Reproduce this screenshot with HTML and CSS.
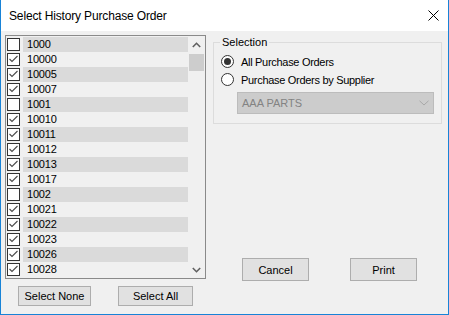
FILE: index.html
```html
<!DOCTYPE html>
<html>
<head>
<meta charset="utf-8">
<link rel="stylesheet" href="styles.css">
</head>
<body>
<div class="window">
  <div class="titlebar">
    <span class="title">Select History Purchase Order</span>
    <svg class="close" width="11" height="11" viewBox="0 0 11 11"><path d="M0.5 0.5 L10.5 10.5 M10.5 0.5 L0.5 10.5" stroke="#000" stroke-width="1" fill="none"/></svg>
  </div>
  <div class="client">
    <div class="left">
      <div class="listbox">
        <ul class="items">
          <li class="item band"><span class="cb"></span><span class="label">1000</span></li>
          <li class="item"><span class="cb checked"><svg viewBox="0 0 11 11"><polyline points="1.5,5 4,7.5 9.5,2"/></svg></span><span class="label">10000</span></li>
          <li class="item band"><span class="cb checked"><svg viewBox="0 0 11 11"><polyline points="1.5,5 4,7.5 9.5,2"/></svg></span><span class="label">10005</span></li>
          <li class="item"><span class="cb checked"><svg viewBox="0 0 11 11"><polyline points="1.5,5 4,7.5 9.5,2"/></svg></span><span class="label">10007</span></li>
          <li class="item band"><span class="cb"></span><span class="label">1001</span></li>
          <li class="item"><span class="cb checked"><svg viewBox="0 0 11 11"><polyline points="1.5,5 4,7.5 9.5,2"/></svg></span><span class="label">10010</span></li>
          <li class="item band"><span class="cb checked"><svg viewBox="0 0 11 11"><polyline points="1.5,5 4,7.5 9.5,2"/></svg></span><span class="label">10011</span></li>
          <li class="item"><span class="cb checked"><svg viewBox="0 0 11 11"><polyline points="1.5,5 4,7.5 9.5,2"/></svg></span><span class="label">10012</span></li>
          <li class="item band"><span class="cb checked"><svg viewBox="0 0 11 11"><polyline points="1.5,5 4,7.5 9.5,2"/></svg></span><span class="label">10013</span></li>
          <li class="item"><span class="cb checked"><svg viewBox="0 0 11 11"><polyline points="1.5,5 4,7.5 9.5,2"/></svg></span><span class="label">10017</span></li>
          <li class="item band"><span class="cb"></span><span class="label">1002</span></li>
          <li class="item"><span class="cb checked"><svg viewBox="0 0 11 11"><polyline points="1.5,5 4,7.5 9.5,2"/></svg></span><span class="label">10021</span></li>
          <li class="item band"><span class="cb checked"><svg viewBox="0 0 11 11"><polyline points="1.5,5 4,7.5 9.5,2"/></svg></span><span class="label">10022</span></li>
          <li class="item"><span class="cb checked"><svg viewBox="0 0 11 11"><polyline points="1.5,5 4,7.5 9.5,2"/></svg></span><span class="label">10023</span></li>
          <li class="item band"><span class="cb checked"><svg viewBox="0 0 11 11"><polyline points="1.5,5 4,7.5 9.5,2"/></svg></span><span class="label">10026</span></li>
          <li class="item"><span class="cb checked"><svg viewBox="0 0 11 11"><polyline points="1.5,5 4,7.5 9.5,2"/></svg></span><span class="label">10028</span></li>
        </ul>
        <div class="scrollbar">
          <div class="sb-btn"><svg width="9" height="6" viewBox="0 0 9 6"><polyline points="0.8,5 4.5,1.3 8.2,5" fill="none" stroke="#606060" stroke-width="1.6"/></svg></div>
          <div class="track"><div class="thumb"></div></div>
          <div class="sb-btn"><svg width="9" height="6" viewBox="0 0 9 6"><polyline points="0.8,1 4.5,4.7 8.2,1" fill="none" stroke="#606060" stroke-width="1.6"/></svg></div>
        </div>
      </div>
      <div class="left-buttons">
        <button class="btn btn-none">Select None</button>
        <button class="btn btn-all">Select All</button>
      </div>
    </div>
    <div class="right">
      <fieldset class="group">
        <legend>Selection</legend>
        <div class="group-body">
          <div class="radio"><span class="dot checked"></span><span>All Purchase Orders</span></div>
          <div class="radio"><span class="dot"></span><span>Purchase Orders by Supplier</span></div>
          <div class="combo"><span>AAA PARTS</span><svg width="10" height="6" viewBox="0 0 10 6"><polyline points="0.5,0.8 5,5 9.5,0.8" fill="none" stroke="#a8a8a8" stroke-width="1"/></svg></div>
        </div>
      </fieldset>
      <div class="right-buttons">
        <button class="btn btn-cancel">Cancel</button>
        <button class="btn btn-print">Print</button>
      </div>
    </div>
  </div>
</div>
</body>
</html>
```

FILE: styles.css
```css
html, body {
  margin: 0;
  padding: 0;
  background: #ffffff;
}

.window {
  width: 449px;
  height: 315px;
  box-sizing: border-box;
  border: 1px solid #1883d7;
  border-top: none;
  background: #f0f0f0;
  display: flex;
  flex-direction: column;
  font-family: "Liberation Sans", Arial, sans-serif;
  font-size: 11px;
  color: #000;
}

.titlebar {
  height: 31px;
  flex: none;
  background: #ffffff;
  display: flex;
  align-items: center;
  justify-content: space-between;
  padding: 0 9px 0 8px;
  font-size: 12px;
  letter-spacing: -0.15px;
}

.title {
  color: #000;
}

.close {
  display: block;
}

.client {
  display: flex;
  gap: 7px;
  padding: 4px 0 0 4px;
}

.left {
  width: 201px;
  flex: none;
}

.listbox {
  height: 244px;
  box-sizing: border-box;
  border: 1px solid #8a8a8a;
  background: #f0f0f0;
  display: flex;
}

.items {
  list-style: none;
  margin: 0;
  padding: 1px 0 0 0;
  width: 182px;
  flex: none;
  letter-spacing: -0.2px;
}

.item {
  height: 15px;
  display: flex;
  align-items: center;
}

.cb {
  width: 13px;
  height: 13px;
  box-sizing: border-box;
  border: 1px solid #333333;
  background: #ffffff;
  margin-left: 1px;
  flex: none;
}

.cb svg {
  display: block;
  width: 11px;
  height: 11px;
}

.cb polyline {
  fill: none;
  stroke: #4a4a4a;
  stroke-width: 1.1;
}

.label {
  flex: 1;
  height: 15px;
  line-height: 15px;
  margin-left: 3px;
  padding-left: 4px;
}

.band .label {
  background: #dadada;
}

.scrollbar {
  width: 17px;
  flex: none;
  display: flex;
  flex-direction: column;
  background: #f0f0f0;
}

.sb-btn {
  height: 17px;
  flex: none;
  display: flex;
  align-items: center;
  justify-content: center;
}

.track {
  flex: 1;
  padding-top: 1px;
}

.thumb {
  height: 17px;
  margin: 0 1px;
  background: #cdcdcd;
}

.left-buttons {
  display: flex;
  margin-top: 7px;
}

.btn {
  font-family: "Liberation Sans", Arial, sans-serif;
  font-size: 11px;
  color: #000;
  background: #e1e1e1;
  border: 1px solid #adadad;
  padding: 0;
  margin: 0;
  box-sizing: border-box;
}

.btn-none {
  width: 73px;
  height: 20px;
  margin-left: 13px;
}

.btn-all {
  width: 75px;
  height: 20px;
  margin-left: 27px;
}

.right {
  width: 229px;
  flex: none;
}

.group {
  margin: 1px 0 0 0;
  padding: 0;
  border: 1px solid #dcdcdc;
  height: 88px;
  box-sizing: border-box;
  min-width: 0;
}

.group legend {
  margin-left: 6px;
  padding: 0 2px;
  line-height: 13px;
  font-size: 11px;
}

.group-body {
  padding: 6px 0 0 7px;
  display: flex;
  flex-direction: column;
}

.radio {
  display: flex;
  align-items: center;
  height: 13px;
  gap: 7px;
  margin-bottom: 5px;
  letter-spacing: -0.3px;
}

.dot {
  width: 13px;
  height: 13px;
  box-sizing: border-box;
  border: 1px solid #333333;
  border-radius: 50%;
  background: #ffffff;
  display: flex;
  align-items: center;
  justify-content: center;
  flex: none;
}

.dot.checked::after {
  content: "";
  width: 7px;
  height: 7px;
  border-radius: 50%;
  background: #333333;
}

.combo {
  margin: 1px 0 0 16px;
  width: 197px;
  height: 22px;
  box-sizing: border-box;
  border: 1px solid #bcbcbc;
  background: #cccccc;
  color: #838383;
  display: flex;
  align-items: center;
  justify-content: space-between;
  padding: 0 4px 0 4px;
}

.combo svg {
  display: block;
}

.right-buttons {
  display: flex;
  margin-top: 134px;
}

.btn-cancel {
  width: 67px;
  height: 23px;
  margin-left: 29px;
}

.btn-print {
  width: 67px;
  height: 23px;
  margin-left: 41px;
}
```
